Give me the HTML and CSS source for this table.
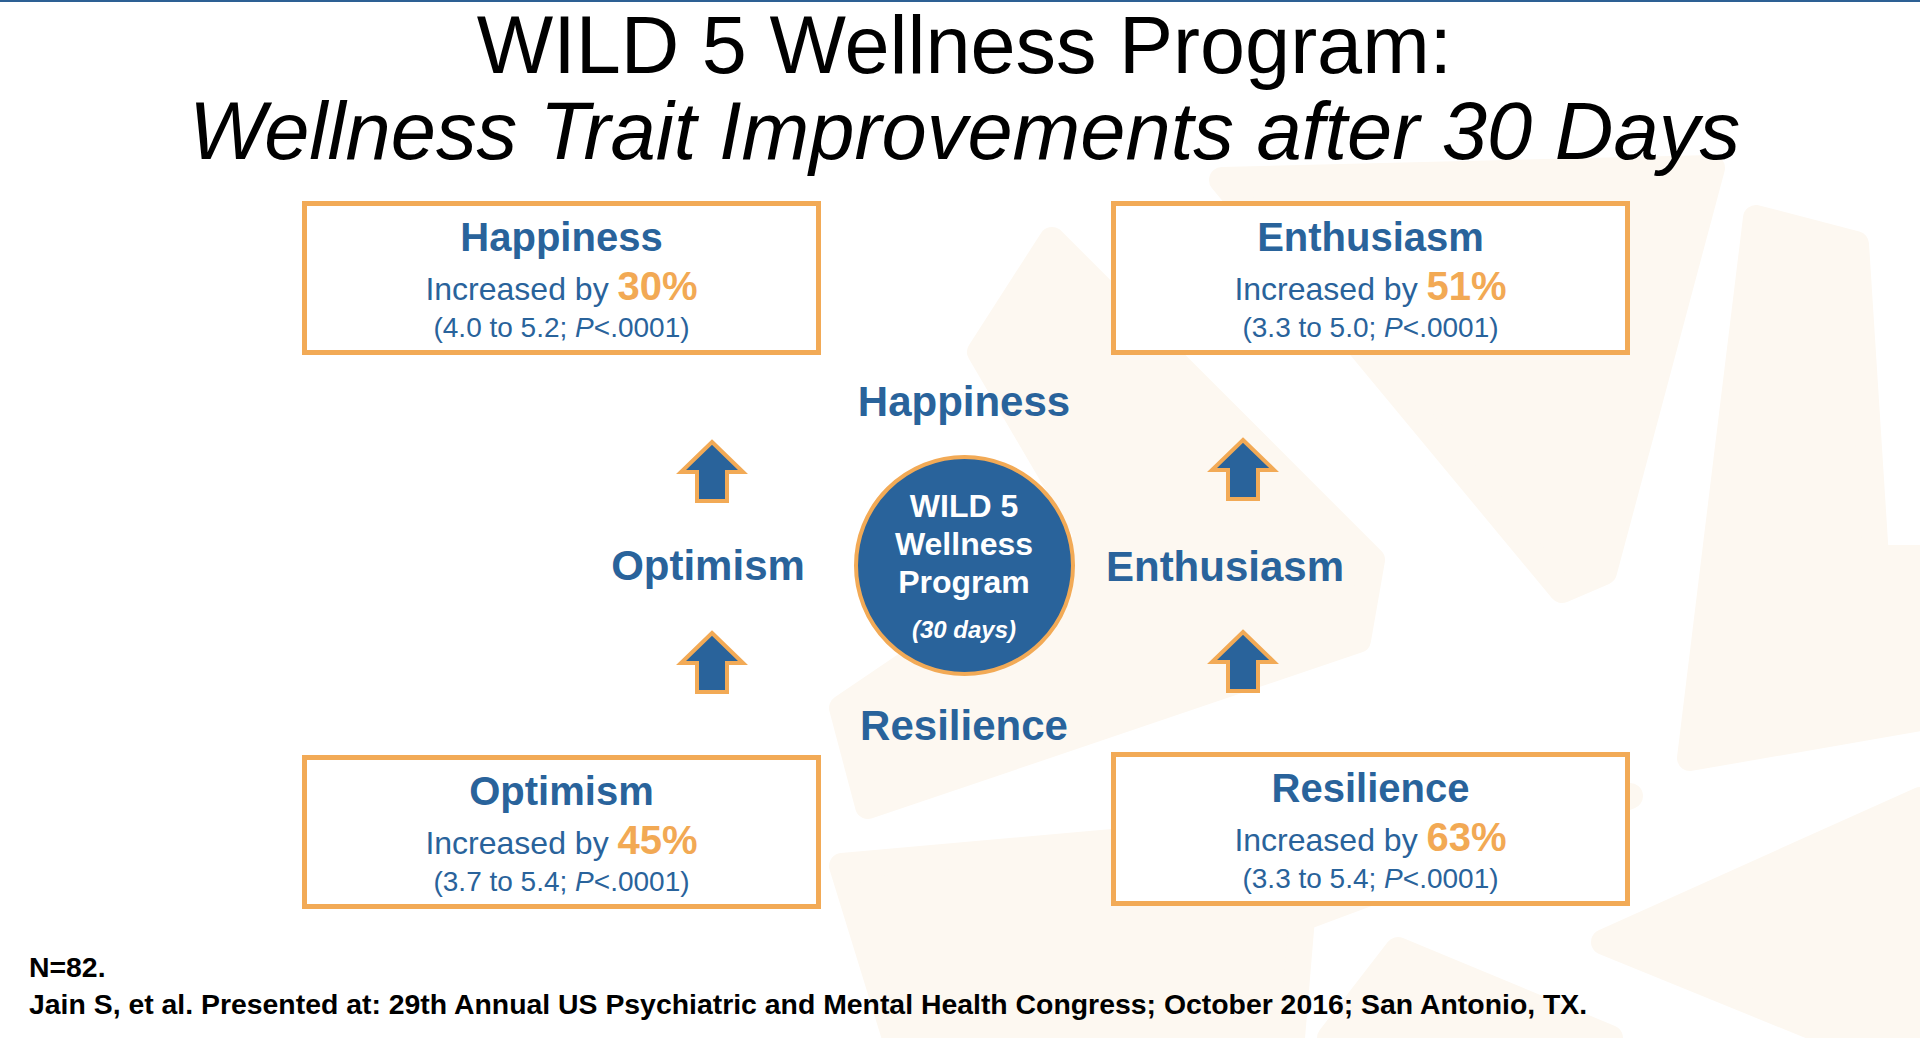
FILE: index.html
```html
<!DOCTYPE html>
<html lang="en">
<head>
<meta charset="utf-8">
<title>WILD 5 Wellness Program</title>
<link rel="stylesheet" href="styles.css">
</head>
<body>
<div class="page">
  <svg class="bg" width="1920" height="1038" viewBox="0 0 1920 1038" aria-hidden="true">
    <g class="bg-shape">
      <polygon points="1222,180 1712,168 1604,572 1562,590"/>
      <polygon points="1052,240 1372,560 1358,640 868,806 842,708 1090,540 980,352"/>
      <polygon points="1756,218 1856,244 1876,558 1920,558 1920,718 1690,758"/>
      <polygon points="1604,942 1920,800 1920,1038 1840,1038"/>
      <polygon points="1330,1038 1398,950 1610,1038"/>
      <polygon points="842,866 1630,796 1302,918 1292,1038 895,1038"/>
    </g>
  </svg>

  <div class="content">
    <h1 class="title">
      <span class="title-line">WILD 5 Wellness Program:</span>
      <span class="title-line title-italic">Wellness Trait Improvements after 30 Days</span>
    </h1>

    <div class="box-row box-row-top">
      <div class="box">
        <div class="box-title">Happiness</div>
        <div class="box-inc">Increased by <span class="pct">30%</span></div>
        <div class="box-sub">(4.0 to 5.2; <i>P</i>&lt;.0001)</div>
      </div>
      <div class="box">
        <div class="box-title">Enthusiasm</div>
        <div class="box-inc">Increased by <span class="pct">51%</span></div>
        <div class="box-sub">(3.3 to 5.0; <i>P</i>&lt;.0001)</div>
      </div>
    </div>

    <div class="middle">
      <div class="col col-left">
        <svg class="arrow arrow-l1" width="68" height="64" viewBox="0 0 68 64"><polygon points="34,3 65,33 49,33 49,62 19,62 19,33 3,33"/></svg>
        <div class="label label-opt">Optimism</div>
        <svg class="arrow arrow-l2" width="68" height="64" viewBox="0 0 68 64"><polygon points="34,3 65,33 49,33 49,62 19,62 19,33 3,33"/></svg>
      </div>
      <div class="col col-center">
        <div class="label label-hap">Happiness</div>
        <div class="circle">
          <div class="c-line">WILD 5</div>
          <div class="c-line">Wellness</div>
          <div class="c-line">Program</div>
          <div class="c-days">(30 days)</div>
        </div>
        <div class="label label-res">Resilience</div>
      </div>
      <div class="col col-right">
        <svg class="arrow arrow-r1" width="68" height="64" viewBox="0 0 68 64"><polygon points="34,3 65,33 49,33 49,62 19,62 19,33 3,33"/></svg>
        <div class="label label-ent">Enthusiasm</div>
        <svg class="arrow arrow-r2" width="68" height="64" viewBox="0 0 68 64"><polygon points="34,3 65,33 49,33 49,62 19,62 19,33 3,33"/></svg>
      </div>
    </div>

    <div class="box-row box-row-bottom">
      <div class="box box-low">
        <div class="box-title">Optimism</div>
        <div class="box-inc">Increased by <span class="pct">45%</span></div>
        <div class="box-sub">(3.7 to 5.4; <i>P</i>&lt;.0001)</div>
      </div>
      <div class="box">
        <div class="box-title">Resilience</div>
        <div class="box-inc">Increased by <span class="pct">63%</span></div>
        <div class="box-sub">(3.3 to 5.4; <i>P</i>&lt;.0001)</div>
      </div>
    </div>

    <div class="foot">
      <p class="foot-line">N=82.</p>
      <p class="foot-line">Jain S, et al. Presented at: 29th Annual US Psychiatric and Mental Health Congress; October 2016; San Antonio, TX.</p>
    </div>
  </div>
</div>
</body>
</html>
```

FILE: styles.css
```css
* { box-sizing: border-box; }

html, body {
  margin: 0;
  padding: 0;
  background: #ffffff;
}

body {
  font-family: "Liberation Sans", Arial, Helvetica, sans-serif;
}

.page {
  position: relative;
  width: 1920px;
  height: 1038px;
  overflow: hidden;
  border-top: 2px solid #2d6094;
  background: #ffffff;
}

.bg {
  position: absolute;
  left: 0;
  top: -2px;
  z-index: 0;
}

.bg-shape polygon {
  fill: #fdf8f1;
  stroke: #fdf8f1;
  stroke-width: 26;
  stroke-linejoin: round;
}

.content {
  position: relative;
  z-index: 1;
}

/* Title */
.title {
  margin: 0;
  padding-left: 9px;
  text-align: center;
  font-weight: normal;
  font-size: 81px;
  line-height: 86px;
  color: #000000;
}

.title-line {
  display: block;
}

.title-italic {
  font-style: italic;
  font-size: 81.3px;
}

/* Result boxes */
.box-row {
  display: flex;
  align-items: flex-start;
  gap: 290px;
  padding-left: 302px;
}

.box-row-top {
  margin-top: 27px;
}

.box {
  width: 519px;
  height: 154px;
  border: 5px solid #f2aa56;
  background: #ffffff;
  padding-top: 9px;
  text-align: center;
  color: #29639b;
}

.box-low {
  margin-top: 3px;
}

.box-title {
  font-size: 40px;
  line-height: 44px;
  font-weight: bold;
}

.box-inc {
  margin-top: 7px;
  font-size: 32px;
  line-height: 46px;
}

.pct {
  font-size: 40px;
  line-height: 40px;
  font-weight: bold;
  color: #f2a954;
}

.box-sub {
  font-size: 28px;
  line-height: 32px;
}

/* Middle diagram */
.middle {
  display: flex;
  height: 397px;
}

.col {
  display: flex;
  flex-direction: column;
  align-items: center;
}

.col-left {
  margin-left: 578px;
  width: 260px;
}

.col-center {
  width: 252px;
}

.col-right {
  width: 270px;
}

.label {
  font-size: 42px;
  line-height: 48px;
  font-weight: bold;
  color: #29639b;
  white-space: nowrap;
}

.arrow {
  display: block;
  overflow: visible;
}

.arrow polygon {
  fill: #29639b;
  stroke: #f2aa56;
  stroke-width: 4;
  stroke-linejoin: miter;
}

.arrow-l1 { margin-top: 84px; margin-left: 8px; }
.label-opt { margin-top: 39px; }
.arrow-l2 { margin-top: 40px; margin-left: 8px; }

.label-hap { margin-top: 23px; }
.circle {
  margin-top: 29px;
  width: 221px;
  height: 221px;
  border: 4px solid #f2aa56;
  border-radius: 50%;
  background: #29639b;
  color: #ffffff;
  text-align: center;
  padding-top: 28px;
}
.label-res { margin-top: 26px; }

.c-line {
  font-size: 32px;
  line-height: 38px;
  font-weight: bold;
}

.c-days {
  margin-top: 14px;
  font-size: 24px;
  line-height: 30px;
  font-weight: bold;
  font-style: italic;
}

.arrow-r1 { margin-top: 82px; margin-left: 36px; }
.label-ent { margin-top: 42px; }
.arrow-r2 { margin-top: 38px; margin-left: 36px; }

/* Footnote */
.foot {
  margin-top: 40px;
  padding-left: 29px;
}

.foot-line {
  margin: 0;
  font-size: 28.4px;
  line-height: 37px;
  font-weight: bold;
  color: #000000;
  white-space: nowrap;
}
```
